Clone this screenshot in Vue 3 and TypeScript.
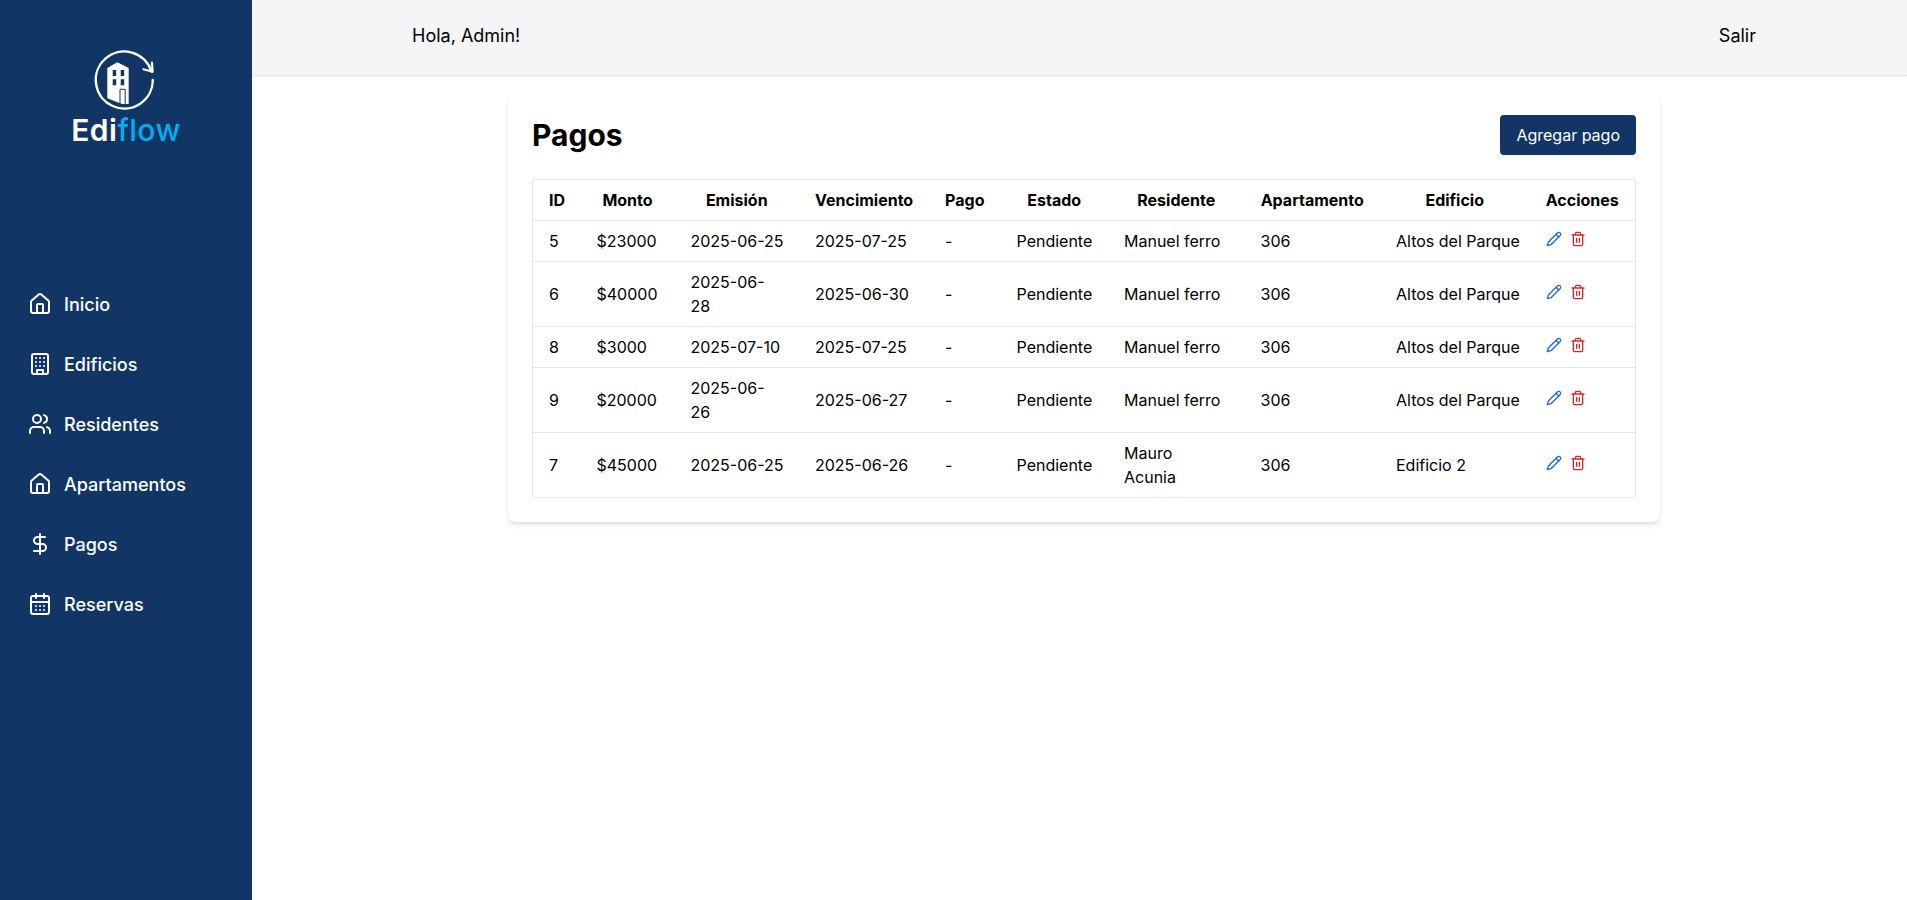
<script setup lang="ts">
interface Row { id: number; monto: string; emision: string; venc: string; residente: string; edificio: string }
const rows: Row[] = [
  { id: 5, monto: '$23000', emision: '2025-06-25', venc: '2025-07-25', residente: 'Manuel ferro', edificio: 'Altos del Parque' },
  { id: 6, monto: '$40000', emision: '2025-06-28', venc: '2025-06-30', residente: 'Manuel ferro', edificio: 'Altos del Parque' },
  { id: 8, monto: '$3000', emision: '2025-07-10', venc: '2025-07-25', residente: 'Manuel ferro', edificio: 'Altos del Parque' },
  { id: 9, monto: '$20000', emision: '2025-06-26', venc: '2025-06-27', residente: 'Manuel ferro', edificio: 'Altos del Parque' },
  { id: 7, monto: '$45000', emision: '2025-06-25', venc: '2025-06-26', residente: 'Mauro Acunia', edificio: 'Edificio 2' },
]
const heads = ['ID', 'Monto', 'Emisión', 'Vencimiento', 'Pago', 'Estado', 'Residente', 'Apartamento', 'Edificio', 'Acciones']
const nav = ['Inicio', 'Edificios', 'Residentes', 'Apartamentos', 'Pagos', 'Reservas']
</script>

<template>
  <div class="app">
    <aside class="side">
      <div class="logo">
        <svg class="mark" viewBox="92 48 64 64" width="64" height="64" fill="none">
          <path d="M151.5 71.5A28.5 28.5 0 1 0 152.8 80" stroke="#fff" stroke-width="2.4" stroke-linecap="round" />
          <path d="M143.5 69.2 152.6 71.8 152 62.5" stroke="#fff" stroke-width="2.2" stroke-linecap="round" stroke-linejoin="round" />
          <path fill="#fff" d="M107.3 68 117.3 62.3 128.7 68V104H122L107.3 98.3Z" />
          <path fill="#113666" d="M112.7 70H116.2V76H112.7ZM120.7 70H124.2V76H120.7ZM112.7 79.3H116.2V85.3H112.7ZM120.7 79.3H124.2V85.3H120.7Z" />
          <path d="M120 104V89.3H125.2V104" stroke="#113666" stroke-width="1" />
        </svg>
        <div class="word">Edi<span>flow</span></div>
      </div>
      <nav class="nav">
        <a v-for="n in nav" :key="n" class="item">
          <svg viewBox="0 0 24 24" width="24" height="24" fill="none" stroke="currentColor" stroke-width="2" stroke-linecap="round" stroke-linejoin="round">
            <template v-if="n === 'Inicio' || n === 'Apartamentos'">
              <path d="M15 21v-8a1 1 0 0 0-1-1h-4a1 1 0 0 0-1 1v8" />
              <path d="M3 10a2 2 0 0 1 .709-1.528l7-5.999a2 2 0 0 1 2.582 0l7 5.999A2 2 0 0 1 21 10v9a2 2 0 0 1-2 2H5a2 2 0 0 1-2-2z" />
            </template>
            <template v-else-if="n === 'Edificios'">
              <rect x="4" y="2" width="16" height="20" rx="2" />
              <path d="M9 22v-4h6v4M8 6h.01M16 6h.01M12 6h.01M12 10h.01M12 14h.01M16 10h.01M16 14h.01M8 10h.01M8 14h.01" />
            </template>
            <template v-else-if="n === 'Residentes'">
              <path d="M16 21v-2a4 4 0 0 0-4-4H6a4 4 0 0 0-4 4v2" />
              <circle cx="9" cy="7" r="4" />
              <path d="M22 21v-2a4 4 0 0 0-3-3.87M16 3.13a4 4 0 0 1 0 7.75" />
            </template>
            <template v-else-if="n === 'Pagos'">
              <path d="M12 2v20M17 5H9.5a3.5 3.5 0 0 0 0 7h5a3.5 3.5 0 0 1 0 7H6" />
            </template>
            <template v-else>
              <path d="M8 2v4M16 2v4" />
              <rect x="3" y="4" width="18" height="18" rx="2" />
              <path d="M3 10h18M8 14h.01M12 14h.01M16 14h.01M8 18h.01M12 18h.01M16 18h.01" />
            </template>
          </svg>
          <span>{{ n }}</span>
        </a>
      </nav>
    </aside>

    <div class="main">
      <header class="top">
        <div class="top-in">
          <span>Hola, Admin!</span>
          <span>Salir</span>
        </div>
      </header>
      <section class="card">
        <div class="card-head">
          <h1>Pagos</h1>
          <button class="add">Agregar pago</button>
        </div>
        <table>
          <thead>
            <tr><th v-for="h in heads" :key="h">{{ h }}</th></tr>
          </thead>
          <tbody>
            <tr v-for="r in rows" :key="r.id">
              <td>{{ r.id }}</td>
              <td>{{ r.monto }}</td>
              <td :class="{ wrap: r.id === 6 || r.id === 9 }">{{ r.emision }}</td>
              <td>{{ r.venc }}</td>
              <td>-</td>
              <td>Pendiente</td>
              <td class="wrap">{{ r.residente }}</td>
              <td>306</td>
              <td>{{ r.edificio }}</td>
              <td>
                <div class="acts">
                  <svg class="edit" viewBox="0 0 24 24" width="16" height="16" fill="none" stroke="currentColor" stroke-width="2" stroke-linecap="round" stroke-linejoin="round">
                    <path d="M17 3a2.85 2.83 0 1 1 4 4L7.5 20.5 2 22l1.5-5.5Z" />
                    <path d="m15 5 4 4" />
                  </svg>
                  <svg class="del" viewBox="0 0 24 24" width="16" height="16" fill="none" stroke="currentColor" stroke-width="2" stroke-linecap="round" stroke-linejoin="round">
                    <path d="M3 6h18M19 6v14c0 1-1 2-2 2H7c-1 0-2-1-2-2V6M8 6V4c0-1 1-2 2-2h4c1 0 2 1 2 2v2M10 11v6M14 11v6" />
                  </svg>
                </div>
              </td>
            </tr>
          </tbody>
        </table>
      </section>
    </div>
  </div>
</template>

<style scoped>
.app { display: flex; min-height: 900px; font-family: Inter, "Liberation Sans", sans-serif; color: #000; font-size: 16px; }
.side { width: 252px; flex: none; background: #113666; color: #fff; display: flex; flex-direction: column; align-items: stretch; }
.logo { height: 174px; padding-top: 48px; box-sizing: border-box; display: flex; flex-direction: column; align-items: center; }
.mark { display: block; margin-left: -4px; }
.word { font-size: 30px; line-height: 36px; font-weight: 600; letter-spacing: 0.5px; }
.word span { color: #00aeef; font-weight: 500; }
.nav { margin-top: 118px; display: flex; flex-direction: column; gap: 36px; padding-left: 28px; }
.item { display: flex; align-items: center; gap: 12px; height: 24px; font-size: 18px; font-weight: 500; }
.main { flex: 1; min-width: 0; display: flex; flex-direction: column; align-items: center; }
.top { align-self: stretch; height: 76px; box-sizing: border-box; background: #f4f5f7; border-bottom: 1px solid #e5e7eb; display: flex; padding: 0 0 4px 9px; justify-content: center; align-items: center; box-shadow: 0 1px 2px rgba(0,0,0,.05); }
.top-in { width: 1344px; display: flex; justify-content: space-between; font-size: 18px; }
.card { width: 1152px; box-sizing: border-box; margin: 15px 0 0 9px; padding: 24px; background: #fff; border-radius: 8px; box-shadow: 0 4px 6px -1px rgba(0,0,0,.1), 0 2px 4px -2px rgba(0,0,0,.1); }
.card-head { display: flex; justify-content: space-between; align-items: center; margin-bottom: 24px; }
h1 { margin: 0; font-size: 30px; line-height: 36px; font-weight: 700; }
.add { height: 40px; padding: 0 16px; border: none; border-radius: 4px; background: #113666; color: #fff; font: 16px/24px Inter, sans-serif; }
table { width: 1104px; table-layout: fixed; border-collapse: collapse; border: 1px solid #e5e7eb; }
th, td { box-sizing: border-box; padding: 8px 16px; line-height: 24px; border-top: 1px solid #e5e7eb; text-align: left; font-size: 16px; }
td { white-space: nowrap; }
td.wrap { white-space: normal; }
th { font-weight: 700; text-align: center; white-space: nowrap; }
th:nth-child(1) { width: 48px; }
th:nth-child(2) { width: 94px; }
th:nth-child(3) { width: 124.5px; }
th:nth-child(4) { width: 130px; }
th:nth-child(5) { width: 71.5px; }
th:nth-child(6) { width: 107.5px; }
th:nth-child(7) { width: 136.5px; }
th:nth-child(8) { width: 135.5px; }
th:nth-child(9) { width: 149.5px; }
th:nth-child(10) { width: 106px; }
.acts { display: flex; gap: 8px; align-items: center; padding-bottom: 4px; }
.edit { color: #2563eb; }
.del { color: #dc2626; }
</style>
